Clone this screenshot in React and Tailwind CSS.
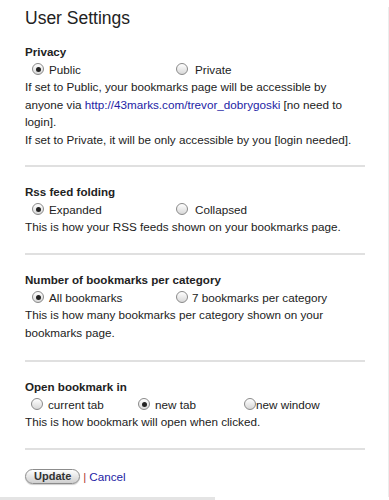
import React from 'react';

const Radio = ({ checked }) => (
  <span className="inline-flex items-center justify-center w-[12px] h-[12px] rounded-full border border-[#8a8a8a] bg-gradient-to-b from-[#ffffff] to-[#d8d8d8] shrink-0">
    {checked && <span className="w-[5px] h-[5px] rounded-full bg-[#222]" />}
  </span>
);

const Option = ({ checked, label, width, gap = 'gap-[5px]' }) => (
  <label className={`flex items-center ${gap} ${width}`}>
    <Radio checked={checked} />
    <span>{label}</span>
  </label>
);

const Rule = () => <div className="h-[2px] bg-[#e0e0e0] mr-[23px]" />;

const Heading = ({ children }) => <div className="font-bold text-[11.6px] h-[17.5px]">{children}</div>;

const App = () => (
  <div
    className="w-[389px] h-[500px] bg-white text-[11.7px] leading-[17.5px] text-[#222] flex flex-col"
    style={{ fontFamily: '"Liberation Sans", Arial, sans-serif' }}
  >
    <div className="flex-1 flex">
      <div className="flex-1 pl-[25px] pt-[6px]">
        <h1 className="text-[17.5px] leading-[24px] font-normal text-[#222]">User Settings</h1>

        {/* Privacy */}
        <div className="mt-[13px]">
          <Heading>Privacy</Heading>
          <div className="flex pl-[7px] h-[17.5px]">
            <Option checked label="Public" width="w-[144px]" />
            <Option label="Private" width="" gap="gap-[7px]" />
          </div>
          <div className="w-[340px]">
            <p>
              If set to Public, your bookmarks page will be accessible by anyone via{' '}
              <a href="#" className="text-[#2323a5]">http://43marks.com/trevor_dobrygoski</a> [no need to login].
            </p>
            <p>If set to Private, it will be only accessible by you [login needed].</p>
          </div>
        </div>
        <div className="mt-[16.5px] mb-[16.5px]"><Rule /></div>

        {/* Rss */}
        <Heading>Rss feed folding</Heading>
        <div className="flex pl-[7px] h-[17.5px]">
          <Option checked label="Expanded" width="w-[144px]" />
          <Option label="Collapsed" width="" gap="gap-[7px]" />
        </div>
        <p>This is how your RSS feeds shown on your bookmarks page.</p>
        <div className="mt-[17px] mb-[16.5px]"><Rule /></div>

        {/* Number */}
        <Heading>Number of bookmarks per category</Heading>
        <div className="flex pl-[7px] h-[17.5px]">
          <Option checked label="All bookmarks" width="w-[144px]" />
          <Option label="7 bookmarks per category" width="" gap="gap-[4px]" />
        </div>
        <p className="w-[320px]">This is how many bookmarks per category shown on your bookmarks page.</p>
        <div className="mt-[18.5px] mb-[16.5px]"><Rule /></div>

        {/* Open */}
        <Heading>Open bookmark in</Heading>
        <div className="flex pl-[6px] h-[17.5px]">
          <Option label="current tab" width="w-[107px]" />
          <Option checked label="new tab" width="w-[106px]" />
          <Option label="new window" width="" gap="gap-0" />
        </div>
        <p>This is how bookmark will open when clicked.</p>
        <div className="mt-[17px] mb-[18px]"><Rule /></div>

        <div className="flex items-center gap-[3px]">
          <button className="h-[15px] px-[8px] rounded-full border border-[#8c8c8c] bg-gradient-to-b from-[#ffffff] to-[#cfcfcf] text-[11px] leading-[13px] font-bold text-[#333] shadow-[0_1px_1px_rgba(0,0,0,0.2)]">
            Update
          </button>
          <span className="text-[#b04030]">|</span>
          <a href="#" className="text-[#2323a5]">Cancel</a>
        </div>
      </div>
      <div className="w-[1px] mt-[7px] bg-[#ececec]" />
    </div>
    <div className="h-[3px] w-[215px] bg-[#e4e4e4]" />
  </div>
);

export default App;
